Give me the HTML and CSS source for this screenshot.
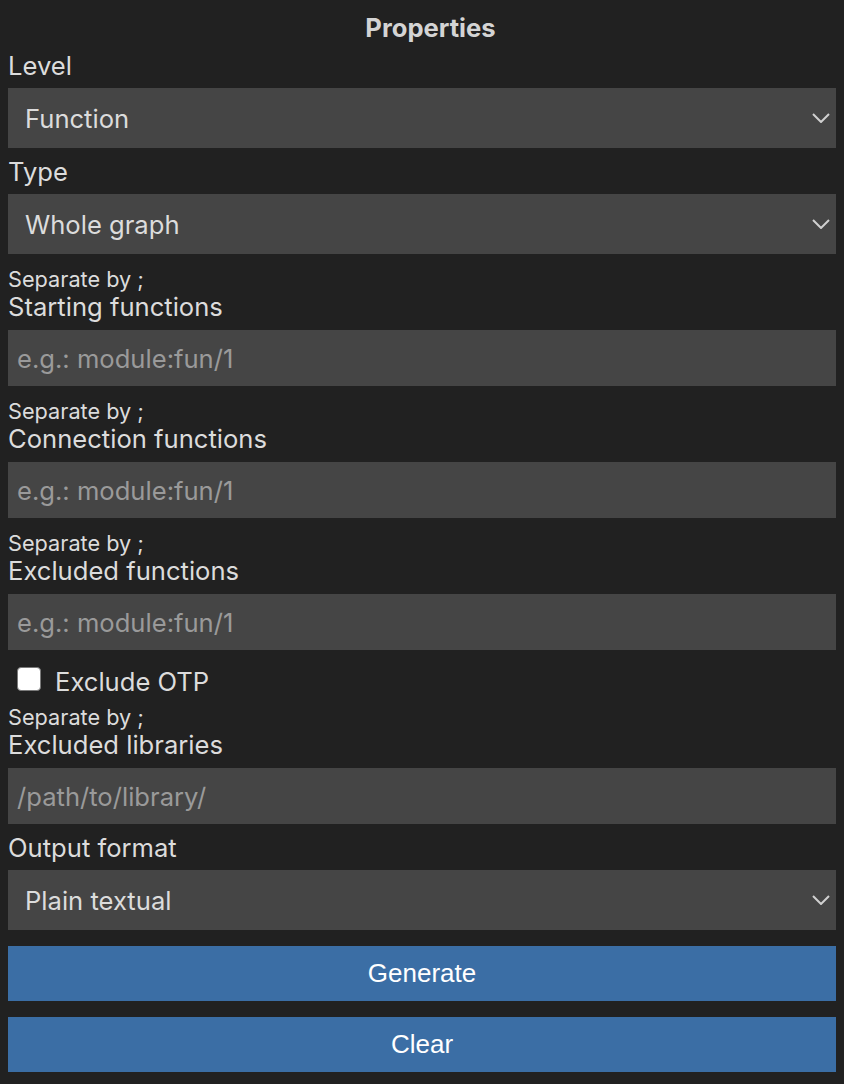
FILE: index.html
```html
<!DOCTYPE html>
<html>
<head>
<meta charset="utf-8">
<link rel="stylesheet" href="styles.css">
</head>
<body>
<div class="panel">
  <div class="title">Properties</div>

  <div class="field">
    <div class="label">Level</div>
    <div class="dropdown"><span>Function</span><svg class="chev" width="18" height="10" viewBox="0 0 18 10"><polyline points="1,1 9,9 17,1" fill="none" stroke="#d0d0d0" stroke-width="2"/></svg></div>
  </div>

  <div class="field">
    <div class="label">Type</div>
    <div class="dropdown"><span>Whole graph</span><svg class="chev" width="18" height="10" viewBox="0 0 18 10"><polyline points="1,1 9,9 17,1" fill="none" stroke="#d0d0d0" stroke-width="2"/></svg></div>
  </div>

  <div class="field">
    <div class="hint">Separate by ;</div>
    <div class="label">Starting functions</div>
    <input class="text-input" type="text" placeholder="e.g.: module:fun/1">
  </div>

  <div class="field">
    <div class="hint">Separate by ;</div>
    <div class="label">Connection functions</div>
    <input class="text-input" type="text" placeholder="e.g.: module:fun/1">
  </div>

  <div class="field">
    <div class="hint">Separate by ;</div>
    <div class="label">Excluded functions</div>
    <input class="text-input" type="text" placeholder="e.g.: module:fun/1">
  </div>

  <label class="check-row"><span class="checkbox"></span><span class="check-text">Exclude OTP</span></label>

  <div class="field">
    <div class="hint">Separate by ;</div>
    <div class="label">Excluded libraries</div>
    <input class="text-input" type="text" placeholder="/path/to/library/">
  </div>

  <div class="field">
    <div class="label">Output format</div>
    <div class="dropdown"><span>Plain textual</span><svg class="chev" width="18" height="10" viewBox="0 0 18 10"><polyline points="1,1 9,9 17,1" fill="none" stroke="#d0d0d0" stroke-width="2"/></svg></div>
  </div>

  <button class="btn">Generate</button>
  <button class="btn">Clear</button>
</div>
</body>
</html>
```

FILE: styles.css
```css
html, body {
  margin: 0;
  padding: 0;
  background: #212121;
}

body {
  font-family: Inter, "Noto Sans", sans-serif;
  color: #d8d8d8;
}

.panel {
  display: flex;
  flex-direction: column;
  padding: 12px 8px 0 8px;
}

.title {
  font-size: 25.6px;
  line-height: 32px;
  font-weight: 700;
  text-align: center;
  padding-left: 17px;
  color: #d4d4d4;
}

.title + .field {
  margin-top: 6px;
}

.field {
  display: flex;
  flex-direction: column;
  margin-top: 8px;
}

.hint {
  font-size: 21.7px;
  line-height: 23px;
  margin-top: 6px;
  color: #dcdcdc;
}

.label {
  font-size: 25.6px;
  line-height: 32px;
  margin-bottom: 6px;
  color: #dcdcdc;
}

.dropdown {
  height: 60px;
  background: #454545;
  display: flex;
  align-items: center;
  justify-content: space-between;
  padding: 0 6px 0 17px;
  font-size: 25.6px;
  color: #dcdcdc;
}

.chev {
  display: block;
}

.text-input {
  margin: 1px 0 0 0;
  height: 56px;
  box-sizing: border-box;
  border: none;
  outline: none;
  background: #454545;
  padding: 0 9px;
  font-family: Inter, "Noto Sans", sans-serif;
  font-size: 25.6px;
  color: #dcdcdc;
}

.text-input::placeholder {
  color: #9a9a9a;
}

.check-row {
  display: flex;
  align-items: center;
  height: 26px;
  margin-top: 16px;
}

.checkbox {
  width: 22px;
  height: 22px;
  margin-left: 9px;
  background: #ffffff;
  border: 1.5px solid #7a7a7a;
  border-radius: 4px;
}

.check-text {
  margin-left: 14px;
  padding-top: 5px;
  font-size: 25.6px;
  color: #dcdcdc;
}

.btn {
  margin-top: 16px;
  height: 55px;
  border: none;
  background: #3b6ea5;
  color: #ffffff;
  font-family: "Liberation Sans", Arial, sans-serif;
  font-size: 26px;
  padding: 0;
}
```
